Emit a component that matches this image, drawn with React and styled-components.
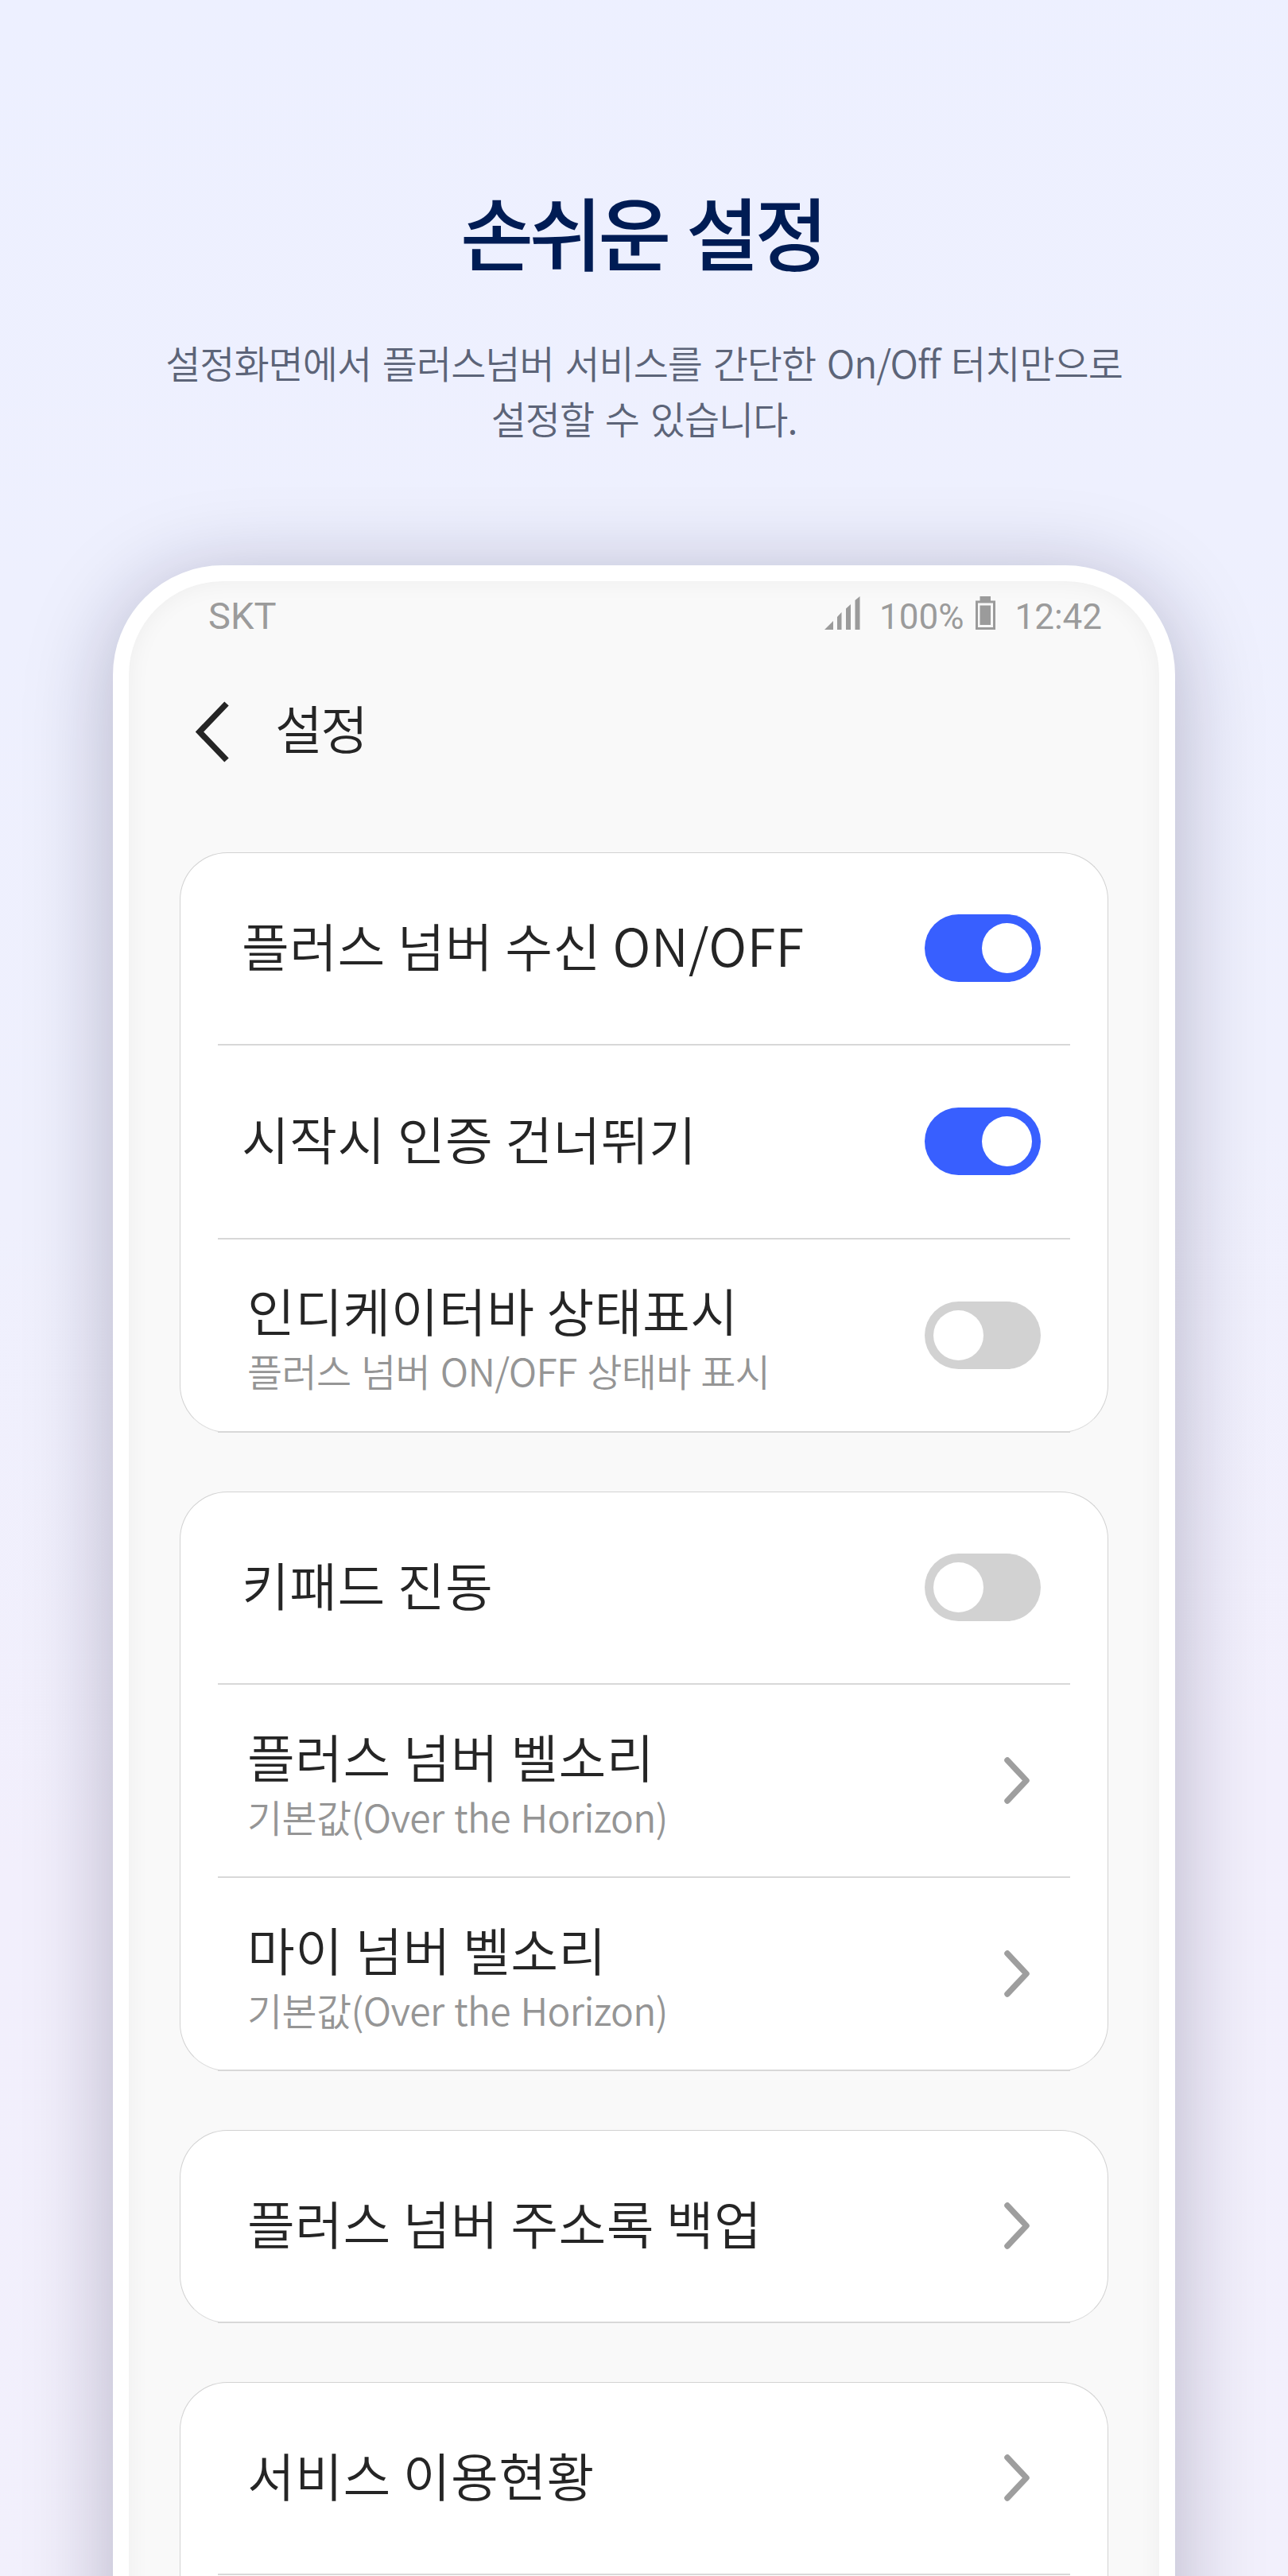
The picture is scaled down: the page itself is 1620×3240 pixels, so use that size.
import React from 'react';
import styled, { createGlobalStyle } from 'styled-components';

const GlobalStyle = createGlobalStyle`
  * {
    box-sizing: border-box;
  }

  body {
    margin: 0;
  }
`;

const Page = styled.div`
  display: flex;
  flex-direction: column;
  align-items: center;
  height: 3240px;
  overflow: hidden;
  background: linear-gradient(175deg, #edf0ff 0%, #eff0fd 45%, #f2effc 70%, #f2f0fc 100%);
  font-family: 'Noto Sans CJK KR', sans-serif;
`;

const Intro = styled.header`
  flex: none;
  height: 711px;
  padding-top: 215px;
  text-align: center;
`;

const Title = styled.h1`
  margin: 0;
  padding-right: 5px;
  font-size: 100px;
  font-weight: 500;
  line-height: 150px;
  letter-spacing: -5.4px;
  word-spacing: 7px;
  color: #001c54;
`;

const Description = styled.p`
  margin: 55px 0 0;
  font-size: 48px;
  font-weight: 350;
  line-height: 70px;
  letter-spacing: -1px;
  word-spacing: 4px;
  color: #5c6478;
`;

const Phone = styled.main`
  flex: none;
  width: 1336px;
  height: 2800px;
  border: 20px solid #fff;
  border-radius: 138px;
  background: #f9f9f9;
  box-shadow: 0 16px 110px rgba(20, 10, 50, 0.27), inset 0 0 30px rgba(0, 0, 0, 0.05);
`;

const StatusBar = styled.div`
  display: flex;
  align-items: flex-end;
  height: 61px;
  padding: 0 72px 0 100px;
  font-family: Roboto, sans-serif;
  font-size: 44px;
  line-height: 32px;
  color: #9b9b9b;
`;

const Carrier = styled.span`
  flex: 1;
  margin-bottom: 1px;
  font-size: 47px;
`;

const Battery = styled.svg`
  margin: 0 24px 0 15px;
`;

const Signal = styled.svg`
  margin-right: 24px;
`;

const AppBar = styled.div`
  display: flex;
  align-items: center;
  height: 259px;
  padding: 0 0 3px 84px;
`;

const AppTitle = styled.h2`
  margin: 0 0 12px 58px;
  font-size: 65px;
  font-weight: 350;
  line-height: 90px;
  letter-spacing: -2.5px;
  color: #252525;
`;

const Groups = styled.div`
  display: flex;
  flex-direction: column;
  gap: 73.7px;
  padding: 21px 64px 0;
`;

const Card = styled.section`
  height: ${p => (p.$tall ? '487px' : 'auto')};
  border: 1px solid #d2d2d2;
  border-bottom-color: #dedede;
  border-radius: 60px;
  background: #fff;
`;

const Row = styled.div`
  display: flex;
  align-items: center;
  justify-content: space-between;
  height: 243.3px;
  margin: 0 47px;
  padding: 0 ${p => (p.$link ? 51 : 37)}px 0 ${p => p.$indent}px;
  border-bottom: 2px solid #d8d8d8;

  &:first-child {
    margin-top: -1px;
  }

  &:last-child {
    margin-bottom: -1px;
  }
`;

const Texts = styled.div`
  padding: ${p => (p.$single ? '0 0 9px' : '4px 0 0')};
`;

const Label = styled.div`
  font-size: 65px;
  font-weight: 350;
  line-height: 84px;
  letter-spacing: 0.45px;
  color: #252525;
  white-space: nowrap;
`;

const Hint = styled.div`
  font-size: 48px;
  font-weight: 350;
  line-height: 68px;
  letter-spacing: -0.65px;
  word-spacing: 2.5px;
  color: #959595;
  white-space: nowrap;
`;

const Switch = styled.div`
  display: flex;
  justify-content: ${p => (p.$on ? 'flex-end' : 'flex-start')};
  width: 146px;
  height: 85px;
  padding: 11px;
  border-radius: 43px;
  background: ${p => (p.$on ? '#385fff' : '#d2d2d2')};
`;

const Knob = styled.div`
  width: 63px;
  height: 63px;
  border-radius: 50%;
  background: #fff;
`;

const groups = [
  [
    { label: '플러스 넘버 수신 ON/OFF', on: true },
    { label: '시작시 인증 건너뛰기', on: true },
    { label: '인디케이터바 상태표시', hint: '플러스 넘버 ON/OFF 상태바 표시', on: false },
  ],
  [
    { label: '키패드 진동', on: false },
    { label: '플러스 넘버 벨소리', hint: '기본값(Over the Horizon)', link: true },
    { label: '마이 넘버 벨소리', hint: '기본값(Over the Horizon)', link: true },
  ],
  [{ label: '플러스 넘버 주소록 백업', link: true }],
  [{ label: '서비스 이용현황', link: true }],
];

const Chevron = () => (
  <svg width="32" height="59" viewBox="0 0 32 59" fill="none" stroke="#9e9e9e" strokeWidth="7.5" strokeLinecap="round" strokeLinejoin="round">
    <path d="M4 4L28 29.5L4 55" />
  </svg>
);

const SettingRow = ({ label, hint, link, on }) => (
  <Row $link={link} $indent={link || hint ? 37 : 30}>
    <Texts $single={!hint}>
      <Label>{label}</Label>
      {hint && <Hint>{hint}</Hint>}
    </Texts>
    {link ? <Chevron /> : <Switch $on={on}><Knob /></Switch>}
  </Row>
);

export default function App() {
  return (
    <Page>
      <GlobalStyle />
      <Intro>
        <Title>손쉬운 설정</Title>
        <Description>
          설정화면에서 플러스넘버 서비스를 간단한 On/Off 터치만으로
          <br />
          설정할 수 있습니다.
        </Description>
      </Intro>
      <Phone>
        <StatusBar>
          <Carrier>SKT</Carrier>
          <Signal width="45" height="42" viewBox="0 0 45 42" fill="#9b9b9b">
            <path d="M0 42L11 31V42zM16 42V26L21.500 20V42zM27 42V15.500L33 10V42zM38.500 42V5L44.500 0V42z" />
          </Signal>
          <span>100%</span>
          <Battery width="25" height="42" viewBox="0 0 25 42" fill="#9b9b9b">
            <path fillRule="evenodd" d="M5.500 0H19V5.500H25V42H0V5.500H5.500zM3 8.500V39H22V8.500z" />
            <path d="M5.500 11.500H19V36H5.500z" />
          </Battery>
          <span>12:42</span>
        </StatusBar>
        <AppBar>
          <svg width="42" height="77" viewBox="0 0 42 77" fill="none" stroke="#252525" strokeWidth="7.500">
            <path d="M39 3L5 38.500L39 74" />
          </svg>
          <AppTitle>설정</AppTitle>
        </AppBar>
        <Groups>
          {groups.map((rows, i) => (
            <Card key={i} $tall={i === groups.length - 1}>
              {rows.map(row => <SettingRow key={row.label} {...row} />)}
            </Card>
          ))}
        </Groups>
      </Phone>
    </Page>
  );
}
